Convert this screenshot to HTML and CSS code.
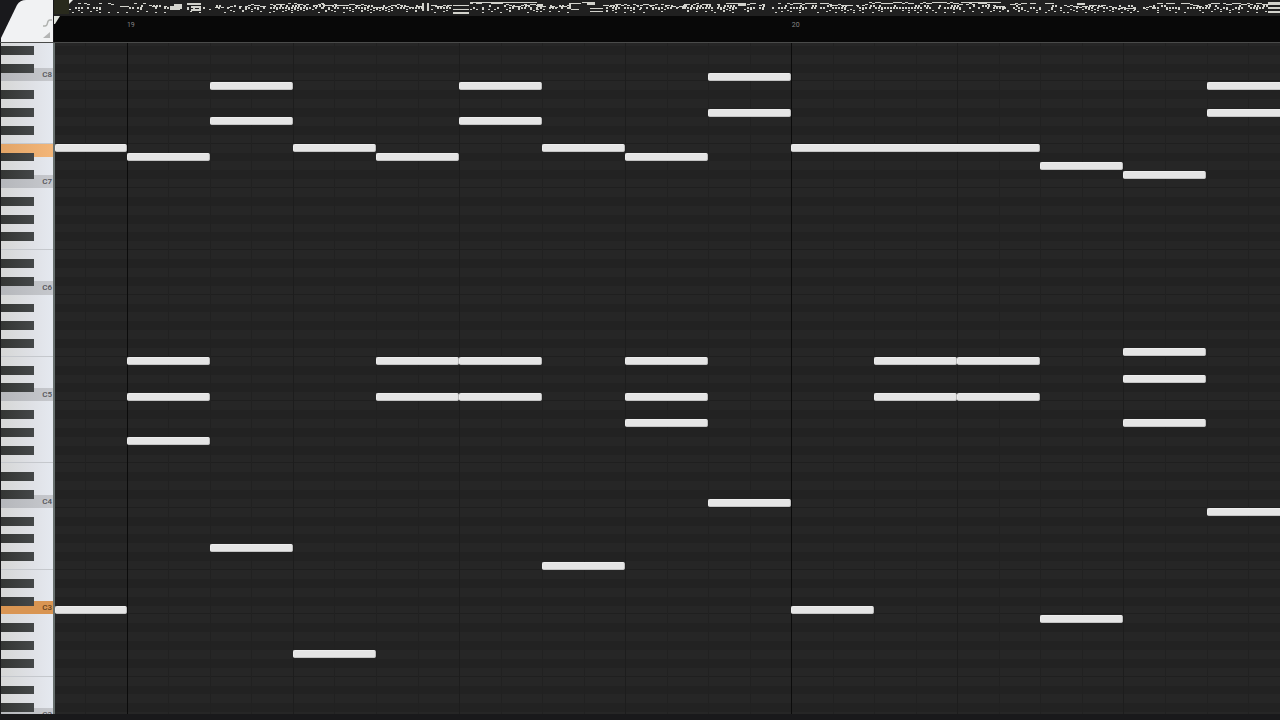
FILE: index.html
```
<!DOCTYPE html>
<html lang="en">
	<head>
		<meta charset="utf-8" />
		<meta name="viewport" content="width=device-width, initial-scale=1" />
		<title>Piano roll</title>
		<link rel="stylesheet" href="styles.css">
	</head>

	<body>
		<header class="top">
			<div class="corner">
				<svg class="corner-shape" viewBox="0 0 54 42" preserveAspectRatio="none" aria-hidden="true">
					<path d="M1 42V38L17 5Q20 0 26 0H53V42Z" fill="#f1f2f3" />
				</svg>
				<svg class="corner-tools" viewBox="0 0 10 22" aria-hidden="true">
					<path d="M0 8H2Q4 8 4.500 5Q5 2 7 2H9" fill="none" stroke="#b0b2af" stroke-width="1.500" />
					<path d="M0 20L7 14V20Z" fill="#b4b5b4" />
				</svg>
			</div>
			<div class="timeline">
				<svg class="overview" viewBox="0 0 1226 16" preserveAspectRatio="none" aria-hidden="true">
					<path class="overview-window" d="M0 0H15V14H0Z" />
					<path class="overview-notes" />
					<path d="M15 0H19L15 4Z" fill="#f1f1ec" />
				</svg>
				<div class="ruler">
					<svg class="playhead" viewBox="0 0 6 8" aria-hidden="true"><path d="M0 0H6L1 8H0Z" fill="#dfe3dc" /></svg>
				</div>
			</div>
		</header>
		<main class="editor">
			<div class="keys"></div>
			<div class="roll"></div>
		</main>
		<script src="roll.js"></script>
	</body>
</html>
```

FILE: styles.css
```
body {
	margin: 0;
	min-height: 100vh;
	display: flex;
	flex-direction: column;
	background: #19191b;
	font-family: "Roboto", "Liberation Sans", sans-serif;
}

.top {
	display: flex;
	height: 42px;
	background: #19191c;
	border-bottom: 1px solid #4a4b4a;
}

.corner {
	position: relative;
	width: 54px;
}

.corner-shape {
	display: block;
	width: 54px;
	height: 42px;
}

.corner-tools {
	position: absolute;
	right: 1px;
	bottom: 2px;
	width: 10px;
	height: 22px;
}

.timeline {
	flex: 1;
	display: flex;
	flex-direction: column;
	background: #080808;
}

.overview {
	display: block;
	width: 100%;
	height: 16px;
	background: #202020;
}

.overview-window {
	fill: #292a1d;
}

.overview-notes {
	fill: #d2d2cc;
}

.ruler {
	position: relative;
	flex: 1;
}

.playhead {
	display: block;
	width: 6px;
	height: 8px;
}

.bar-number {
	position: absolute;
	top: 5px;
	padding-left: 1px;
	font-size: 7px;
	line-height: 8px;
	color: #858585;
}

.editor {
	flex: 1;
	display: flex;
	margin-bottom: 6px;
}

.keys,
.roll {
	position: relative;
	overflow: hidden;
}

.keys {
	width: 52px;
	border-left: 1px solid #19191b;
	border-right: 2px solid #68706f;
	background: linear-gradient(90deg, #d6d7d6, #dfe1e6 60%, #e5e9f0);
}

.key {
	position: absolute;
	left: 0;
	width: 100%;
	box-sizing: border-box;
}

.key-c {
	padding-right: 1px;
	background: linear-gradient(90deg, #b5b7bb, #c6c8cd);
	color: #515257;
	font-size: 8px;
	font-weight: 500;
	line-height: 14px;
	text-align: right;
}

.key-f {
	border-bottom: 1px solid #c5c8cd;
}

.key-down {
	background: linear-gradient(90deg, #e2a466, #f3b679);
}

.key-c.key-down {
	background: #d99552;
	color: #61401d;
}

.key-black {
	width: 33px;
	background: linear-gradient(90deg, #343634, #444748);
}

.roll {
	flex: 1;
	background: #262626;
}

.row {
	position: absolute;
	left: 0;
	width: 100%;
	box-sizing: border-box;
}

.row-black {
	background: #222222;
}

.row-split {
	border-bottom: 1px solid #1f1f1f;
}

.line {
	position: absolute;
	top: 0;
	bottom: 0;
	width: 1px;
	background: #212121;
}

.line-beat {
	background: #1d1d1d;
}

.line-bar {
	background: #0b0b0b;
}

.note {
	position: absolute;
	height: 8px;
	box-sizing: border-box;
	border: 1px solid #ededed;
	border-right-color: #bcbcbc;
	border-bottom-color: #c4c4c4;
	border-radius: 2px;
	background: #e5e5e5;
}
```

FILE: roll.js
```
"use strict";
// geometry of the visible part of the roll
var OCTAVE = 106.6;
var ROW = OCTAVE / 12;
var C8 = 34; // centre of the C8 row
var STEPS = 14.75; // eighth notes across the roll
var FIRST_BAR = 0.865;

var keys = document.querySelector(".keys");
var roll = document.querySelector(".roll");
var ruler = document.querySelector(".ruler");

function add(parent, className, text) {
	var element = parent.appendChild(document.createElement("div"));
	element.className = className;
	if (text) element.textContent = text;
	return element;
}

function centre(pitch) {
	return C8 + (96 - pitch) * ROW;
}

function percent(step) {
	return (step + FIRST_BAR) / STEPS * 100 + "%";
}

function place(element, top, bottom) {
	element.style.top = Math.round(top) + "px";
	element.style.height = Math.round(bottom) - Math.round(top) + "px";
}

var down = [88, 36];
var blacks = [1, 3, 6, 8, 10];

for (var pitch = 99; pitch >= 24; --pitch) {
	var tone = pitch % 12, y = centre(pitch);
	var row = add(roll, "row");
	if (blacks.indexOf(tone) >= 0) row.className += " row-black";
	if (tone === 0 || tone === 5) row.className += " row-split";
	place(row, y - ROW / 2, y + ROW / 2);

	var isDown = down.indexOf(pitch) >= 0 ? " key-down" : "";
	if (tone === 0)
		place(add(keys, "key key-c" + isDown, "C" + pitch / 12), y - ROW, y + ROW / 2);
	else if (tone === 5)
		place(add(keys, "key key-f"), y - ROW, y + ROW / 2);
	else if (isDown)
		place(add(keys, "key" + isDown), y - ROW / 2, y + ROW);
}

for (pitch = 99; pitch >= 24; --pitch)
	if (blacks.indexOf(pitch % 12) >= 0)
		place(add(keys, "key key-black"), centre(pitch) - ROW / 2, centre(pitch) + ROW / 2);

for (var half = -1; half < 28; ++half) {
	var type = half % 16 === 0 ? " line-bar" : half % 4 === 0 ? " line-beat" : "";
	add(roll, "line" + type).style.left = percent(half / 2);
}

[19, 20].forEach(function(bar, i) {
	add(ruler, "bar-number", String(bar)).style.left = percent(i * 8);
});

// [start, length, pitches]
var notes = [
	[-0.865, 0.865, [88, 36]],
	[0, 1, [87, 64, 60, 55]],
	[1, 1, [95, 91, 43]],
	[2, 1, [88, 31]],
	[3, 1, [87, 64, 60]],
	[4, 1, [95, 91, 64, 60]],
	[5, 1, [88, 41]],
	[6, 1, [87, 64, 60, 57]],
	[7, 1, [96, 92, 48]],
	[8, 3, [88]],
	[8, 1, [36]],
	[9, 1, [64, 60]],
	[10, 1, [64, 60]],
	[11, 1, [86, 35]],
	[12, 1, [85, 65, 62, 57]],
	[13, 1, [95, 92, 47]]
];

notes.forEach(function(entry) {
	entry[2].forEach(function(pitch) {
		var note = add(roll, "note");
		note.style.left = percent(entry[0]);
		note.style.width = entry[1] / STEPS * 100 + "%";
		note.style.top = Math.round(centre(pitch) - 4) + "px";
	});
});

// overview strip: [from, to, top of the melody, density]
var passages = [
	[15, 80, 3, 40], [80, 116, 3, 60], [133, 148, 4, 50],
	[149, 216, 4, 50], [216, 268, 3, 80], [268, 368, 4, 80],
	[377, 398, 4, 85], [416, 483, 3, 60], [483, 516, 4, 75],
	[549, 586, 4, 75], [586, 630, 4, 85], [630, 684, 3, 80],
	[690, 711, 3, 70], [718, 724, 4, 60], [724, 815, 3, 75],
	[815, 906, 2, 85], [906, 950, 3, 70], [950, 961, 4, 50],
	[961, 1010, 3, 55], [1010, 1080, 5, 85], [1080, 1100, 5, 60],
	[1100, 1212, 3, 85]
];
var solids = [
	[116, 6, 10, 4], [120, 4, 8, 5], [133, 3, 14, 2], [137, 6, 10, 2],
	[137, 9, 10, 2], [368, 3, 2, 8], [373, 3, 2, 8], [399, 5, 16, 1],
	[399, 9, 16, 1], [399, 12, 16, 2], [416, 2, 67, 1], [483, 4, 6, 3],
	[515, 3, 2, 6], [517, 3, 10, 1], [517, 9, 8, 1], [528, 2, 8, 1],
	[533, 2, 8, 3], [536, 8, 13, 1], [536, 11, 13, 1], [684, 3, 8, 3],
	[907, 2, 40, 1], [1023, 3, 8, 2],
	[1214, 2, 12, 3], [1214, 7, 12, 2], [1214, 11, 12, 2]
];
var seed = 19;
function random() {
	seed = seed * 16807 % 2147483647;
	return seed / 2147483647;
}

var d = "";
function block(x, y, w, h) {
	d += "M" + x + " " + y + "h" + w + "v" + h + "h-" + w + "z";
}
// melody wanders over two or three pixels, chords sit under it, bass is sparse
passages.forEach(function(p) {
	var melody = p[2];
	for (var x = p[0], i = 0; x < p[1]; x += 3, ++i) {
		melody = Math.max(p[2], Math.min(p[2] + 3, melody + Math.floor(random() * 3) - 1));
		if (random() * 100 < p[3]) block(x, melody, 3, 1);
		if (random() * 100 < p[3] - 10) block(x, 7, 2, 2);
		if (random() * 100 < p[3] - 45) block(x + 1, 5, 2, 2);
		if (random() * 100 < p[3] / 2) block(x, 9 + i % 2, 2, 1);
		if (i % 3 === 1 && random() < 0.8) block(x, 11 + Math.floor(random() * 2), 2, 1);
	}
});
solids.forEach(function(s) {
	block(s[0], s[1], s[2], s[3]);
});
document.querySelector(".overview-notes").setAttribute("d", d);
```
